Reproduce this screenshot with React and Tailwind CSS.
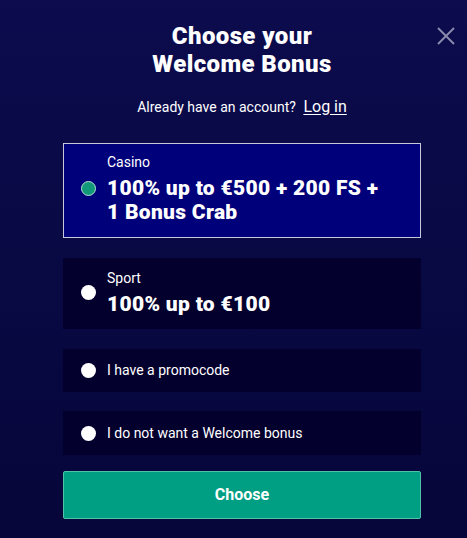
export default function App() {
  const options = [
    { id: 'casino', label: 'Casino', title: '100% up to €500 + 200 FS + 1 Bonus Crab', selected: true },
    { id: 'sport', label: 'Sport', title: '100% up to €100' },
  ]

  return (
    <div
      className="relative h-[538px] w-[467px] overflow-hidden bg-gradient-to-b from-[#0c0c4e] to-[#06063a] text-white"
      style={{ fontFamily: 'Roboto, "Noto Sans", sans-serif' }}
    >
      <button className="absolute right-[11px] top-[26px] text-[#8c8cb0]">
        <svg width="20" height="20" viewBox="0 0 20 20" fill="none" stroke="currentColor" strokeWidth="1.8">
          <path d="M2 2 L18 18 M18 2 L2 18" />
        </svg>
      </button>

      <div className="ml-[63px] flex w-[358px] flex-col">
        <h1 className="pt-[22px] text-center text-[24px] font-black leading-[28px] tracking-[0.4px]">
          Choose your
          <br />
          Welcome Bonus
        </h1>

        <p className="mt-[19px] text-center text-[14px] leading-[20px]">
          Already have an account?{' '}
          <a className="ml-1 text-[16px] underline underline-offset-2">Log in</a>
        </p>

        <div className="mt-[26px] flex flex-col">
          {options.map((o) => (
            <div
              key={o.id}
              className={
                o.selected
                  ? 'flex items-center border border-[#c8c8dc] bg-[#00007a] pb-[13px] pl-[17px] pr-[28px] pt-[8px]'
                  : 'mt-[20px] flex items-center bg-[#04002e] pb-[13px] pl-[18px] pr-[28px] pt-[10px]'
              }
            >
              <span
                className={
                  o.selected
                    ? 'h-[15px] w-[15px] shrink-0 rounded-full border border-[#b8e0d4] bg-[#11997a]'
                    : 'h-[15px] w-[15px] shrink-0 rounded-full bg-white'
                }
              />
              <div className="ml-[11px]">
                <div className="text-[14px] leading-[20px]">{o.label}</div>
                <div className="mt-[4px] text-[21px] font-black leading-[24px] tracking-[0.3px]">{o.title}</div>
              </div>
            </div>
          ))}

          <div className="mt-[20px] flex h-[43px] items-center bg-[#04002e] pl-[18px]">
            <span className="h-[15px] w-[15px] rounded-full bg-white" />
            <span className="ml-[11px] text-[14px]">I have a promocode</span>
          </div>

          <div className="mt-[19px] flex h-[44px] items-center bg-[#04002e] pl-[18px]">
            <span className="h-[15px] w-[15px] rounded-full bg-white" />
            <span className="ml-[11px] text-[14px]">I do not want a Welcome bonus</span>
          </div>

          <button className="mt-[16px] h-[48px] w-full rounded-[2px] border border-[#4fc2a8] bg-[#009e82] text-[16px] font-bold">
            Choose
          </button>
        </div>
      </div>
    </div>
  )
}
